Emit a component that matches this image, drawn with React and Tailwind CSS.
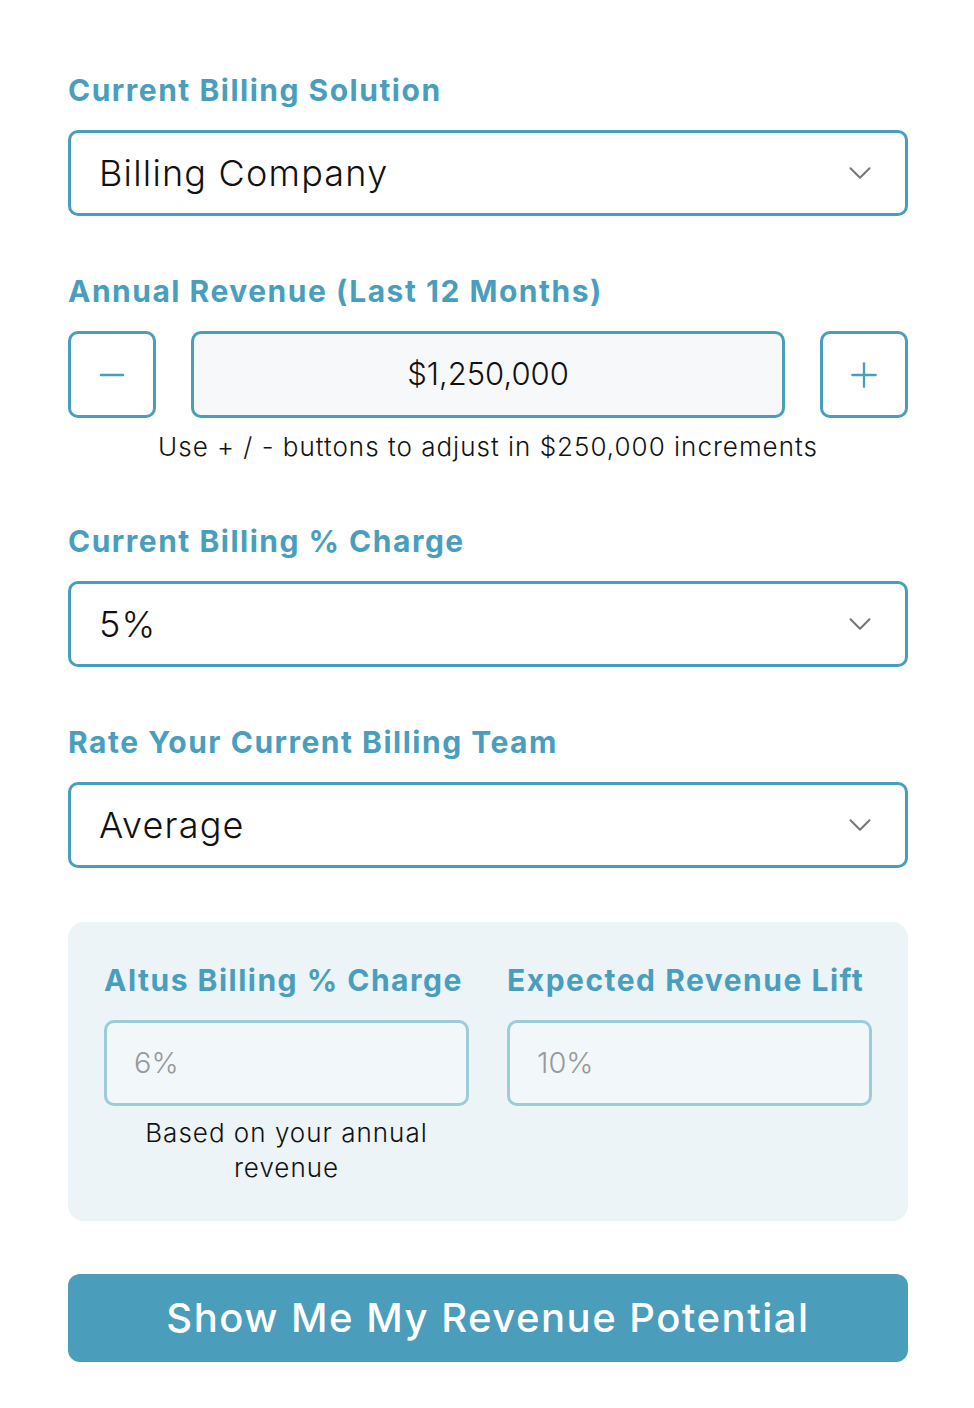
import { ChevronDown, Minus, Plus } from 'lucide-react';

const font = { fontFamily: 'Inter, "DejaVu Sans", sans-serif' };

function Label({ children }) {
  return (
    <h3 className="text-[30px] font-bold leading-none text-[#4a9ebd] tracking-[1.5px]">
      {children}
    </h3>
  );
}

function SelectBox({ value }) {
  return (
    <div className="mt-[25px] h-[86px] rounded-[10px] border-[3px] border-[#4a9ebd] bg-white flex items-center justify-between pl-[28px] pr-[26px]">
      <span className="text-[36px] font-light text-[#111] leading-none tracking-[1.2px]">{value}</span>
      <ChevronDown className="w-[38px] h-[38px] text-[#777]" strokeWidth={1.3} />
    </div>
  );
}

export default function App() {
  return (
    <div className="min-h-screen bg-white pl-[68px] pr-[66px] pt-[75px] pb-[46px]" style={font}>
      {/* Current billing solution */}
      <section>
        <Label>Current Billing Solution</Label>
        <SelectBox value="Billing Company" />
      </section>

      {/* Annual revenue */}
      <section className="mt-[60px]">
        <Label>Annual Revenue (Last 12 Months)</Label>
        <div className="mt-[25px] flex items-center gap-[35px]">
          <button className="w-[88px] h-[87px] shrink-0 rounded-[10px] border-[3px] border-[#4a9ebd] bg-white flex items-center justify-center">
            <Minus className="w-[38px] h-[38px] text-[#4a9ebd]" strokeWidth={1.5} />
          </button>
          <div className="flex-1 h-[87px] rounded-[10px] border-[3px] border-[#4a9ebd] bg-[#f7f8fa] flex items-center justify-center">
            <span className="text-[31px] font-light text-[#111]">$1,250,000</span>
          </div>
          <button className="w-[88px] h-[87px] shrink-0 rounded-[10px] border-[3px] border-[#4a9ebd] bg-white flex items-center justify-center">
            <Plus className="w-[40px] h-[40px] text-[#4a9ebd]" strokeWidth={1.4} />
          </button>
        </div>
        <p className="mt-[9px] text-center text-[26px] font-light text-[#111] tracking-[1px]">
          Use + / - buttons to adjust in $250,000 increments
        </p>
      </section>

      {/* Current billing % */}
      <section className="mt-[60px]">
        <Label>Current Billing % Charge</Label>
        <SelectBox value="5%" />
      </section>

      {/* Team rating */}
      <section className="mt-[60px]">
        <Label>Rate Your Current Billing Team</Label>
        <SelectBox value="Average" />
      </section>

      {/* Altus panel */}
      <section className="mt-[54px] rounded-[16px] bg-[#ecf4f7] px-[36px] pt-[43px] pb-[36px] grid grid-cols-2 gap-x-[38px]">
        <div>
          <Label>Altus Billing % Charge</Label>
          <div className="mt-[25px] h-[86px] rounded-[10px] border-[3px] border-[#9ccbd9] bg-[#f2f7fa] flex items-center px-[27px]">
            <span className="text-[29px] font-light text-[#999]">6%</span>
          </div>
          <p className="mt-[9px] text-center text-[26px] font-light text-[#111] leading-[35px] tracking-[1px] px-[24px]">
            Based on your annual revenue
          </p>
        </div>
        <div>
          <Label>Expected Revenue Lift</Label>
          <div className="mt-[25px] h-[86px] rounded-[10px] border-[3px] border-[#9ccbd9] bg-[#f2f7fa] flex items-center px-[27px]">
            <span className="text-[29px] font-light text-[#999]">10%</span>
          </div>
        </div>
      </section>

      <button className="mt-[53px] w-full h-[88px] rounded-[12px] bg-[#4a9dbb] text-white text-[40px] font-medium tracking-[1.5px] flex items-center justify-center">
        Show Me My Revenue Potential
      </button>
    </div>
  );
}
